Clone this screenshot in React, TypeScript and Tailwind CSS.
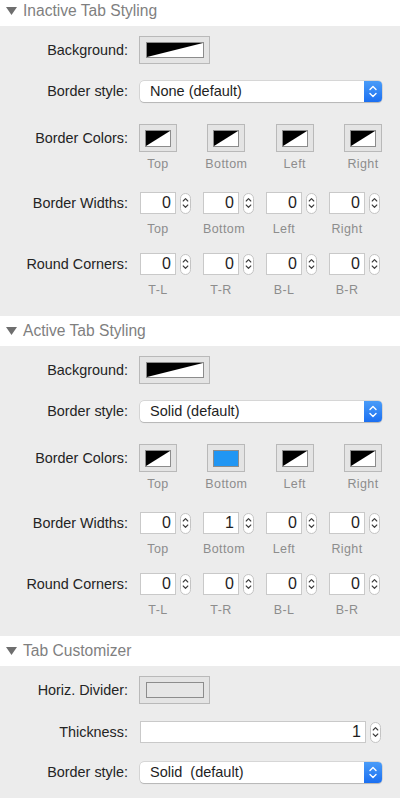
import React from 'react';

const font = { fontFamily: '"Liberation Sans", Arial, sans-serif' };

function SectionHeader({ title, className = '' }: { title: string; className?: string }) {
  return (
    <div className={`flex h-[30px] items-center bg-white pl-[6px] ${className}`}>
      <svg width="11" height="8" viewBox="0 0 11 8" className="mr-[6px]">
        <path d="M0 0 L11 0 L5.5 8 Z" fill="#6e6e6e" />
      </svg>
      <span className="text-[15.6px] text-[#7f7f7f]">{title}</span>
    </div>
  );
}

function Label({ children }: { children: React.ReactNode }) {
  return (
    <div className="w-[128px] shrink-0 text-right text-[14.4px] leading-none text-[#242424]">
      {children}
    </div>
  );
}

// Black/white "no fill" swatch inside a bevelled colour well
function Swatch({ fill }: { fill?: string }) {
  return (
    <div className="h-full w-full border border-[#8c8c8c] bg-white">
      {fill ? (
        <div className="h-full w-full" style={{ background: fill }} />
      ) : (
        <svg width="100%" height="100%" viewBox="0 0 10 10" preserveAspectRatio="none" className="block">
          <path d="M0 0 L10 0 L0 10 Z" fill="#000" />
        </svg>
      )}
    </div>
  );
}

function WideWell({ fill }: { fill?: string }) {
  return (
    <div className="flex h-[28px] w-[71px] items-center justify-center border border-[#b9b9b9] bg-[#e4e4e4]">
      <div className="h-[16px] w-[58px]">
        <Swatch fill={fill} />
      </div>
    </div>
  );
}

function SmallWell({ fill }: { fill?: string }) {
  return (
    <div className="flex h-[28px] w-[38px] items-center justify-center border border-[#b9b9b9] bg-[#e4e4e4]">
      <div className="h-[17px] w-[26px]">
        <Swatch fill={fill} />
      </div>
    </div>
  );
}

function Select({ value }: { value: string }) {
  return (
    <div className="ml-[1px] flex h-[21px] w-[242px] items-stretch overflow-hidden rounded-[4px] bg-white shadow-[0_0_0_0.5px_rgba(0,0,0,0.18),0_1px_1px_rgba(0,0,0,0.15)]">
      <div className="flex flex-1 items-center whitespace-pre pl-[10px] text-[14.5px] text-[#1e1e1e]">{value}</div>
      <div className="flex w-[18px] items-center justify-center bg-gradient-to-b from-[#4a9cf8] to-[#1b6ff1]">
        <svg width="8" height="13" viewBox="0 0 8 13" fill="none" stroke="#fff" strokeWidth="1.4" strokeLinecap="round" strokeLinejoin="round">
          <path d="M1 4.5 L4 1.5 L7 4.5" />
          <path d="M1 8.5 L4 11.5 L7 8.5" />
        </svg>
      </div>
    </div>
  );
}

function Stepper() {
  return (
    <div className="flex h-[21px] w-[11px] items-center justify-center rounded-full border border-[#c4c4c4] bg-white">
      <svg width="7" height="14" viewBox="0 0 7 14" fill="none" stroke="#3a3a3a" strokeWidth="1.1" strokeLinecap="round" strokeLinejoin="round">
        <path d="M1.2 5 L3.5 2.6 L5.8 5" />
        <path d="M1.2 9 L3.5 11.4 L5.8 9" />
      </svg>
    </div>
  );
}

function NumberField({ value, width = 'w-[36px]' }: { value: string; width?: string }) {
  return (
    <div className="flex items-center gap-[4px]">
      <div
        className={`flex h-[22px] ${width} items-center justify-end border border-[#c9c9c9] bg-white pr-[4px] text-[16px] text-[#1e1e1e]`}
      >
        {value}
      </div>
      <Stepper />
    </div>
  );
}

function SubLabel({ children }: { children: React.ReactNode }) {
  return (
    <div className="text-center text-[12.5px] leading-[14px] tracking-[0.4px] text-[#8d8d8d]">{children}</div>
  );
}

function ColorsRow({ fills }: { fills: (string | undefined)[] }) {
  const names = ['Top', 'Bottom', 'Left', 'Right'];
  return (
    <div className="mt-[21px] flex">
      <Label>
        <div className="flex h-[28px] items-center justify-end">Border Colors:</div>
      </Label>
      <div className="ml-[11px] flex w-[243px] justify-between">
        {names.map((n, i) => (
          <div key={n} className="flex w-[38px] flex-col items-center">
            <SmallWell fill={fills[i]} />
            <div className="mt-[5px] w-[60px]">
              <SubLabel>{n}</SubLabel>
            </div>
          </div>
        ))}
      </div>
    </div>
  );
}

function FieldsRow({
  label,
  values,
  names,
  className = '',
}: {
  label: string;
  values: string[];
  names: string[];
  className?: string;
}) {
  return (
    <div className={`flex ${className}`}>
      <Label>
        <div className="flex h-[22px] items-center justify-end">{label}</div>
      </Label>
      <div className="ml-[12px] flex gap-[12px]">
        {values.map((v, i) => (
          <div key={i} className="flex w-[51px] flex-col">
            <NumberField value={v} />
            <div className="mt-[8px] w-[36px]">
              <SubLabel>{names[i]}</SubLabel>
            </div>
          </div>
        ))}
      </div>
    </div>
  );
}

function TabStyling({
  bgFill,
  borderStyle,
  colors,
  widths,
}: {
  bgFill?: string;
  borderStyle: string;
  colors: (string | undefined)[];
  widths: string[];
}) {
  return (
    <div className="pt-[10px] pb-[19px]">
      <div className="flex h-[28px] items-center">
        <Label>Background:</Label>
        <div className="ml-[11px]">
          <WideWell fill={bgFill} />
        </div>
      </div>
      <div className="mt-[17px] flex h-[21px] items-center">
        <Label>Border style:</Label>
        <div className="ml-[11px]">
          <Select value={borderStyle} />
        </div>
      </div>
      <div className="h-px" />
      <ColorsRow fills={colors} />
      <FieldsRow
        className="mt-[21px]"
        label="Border Widths:"
        values={widths}
        names={['Top', 'Bottom', 'Left', 'Right']}
      />
      <FieldsRow
        className="mt-[17px]"
        label="Round Corners:"
        values={['0', '0', '0', '0']}
        names={['T-L', 'T-R', 'B-L', 'B-R']}
      />
    </div>
  );
}

export default function App() {
  return (
    <div className="h-[798px] w-[400px] overflow-hidden bg-[#ececec]" style={font}>
      <SectionHeader title="Inactive Tab Styling" className="-mt-[4px]" />
      <TabStyling
        borderStyle="None (default)"
        colors={[undefined, undefined, undefined, undefined]}
        widths={['0', '0', '0', '0']}
      />

      <SectionHeader title="Active Tab Styling" />
      <TabStyling
        borderStyle="Solid (default)"
        colors={[undefined, '#2196f3', undefined, undefined]}
        widths={['0', '1', '0', '0']}
      />

      <SectionHeader title="Tab Customizer" />
      <div className="pt-[10px]">
        <div className="flex h-[28px] items-center">
          <Label>Horiz. Divider:</Label>
          <div className="ml-[11px]">
            <WideWell fill="#e6e6e6" />
          </div>
        </div>
        <div className="mt-[17px] flex h-[22px] items-center">
          <Label>Thickness:</Label>
          <div className="ml-[12px]">
            <NumberField value="1" width="w-[226px]" />
          </div>
        </div>
        <div className="mt-[19px] flex h-[21px] items-center">
          <Label>Border style:</Label>
          <div className="ml-[11px]">
            <Select value="Solid  (default)" />
          </div>
        </div>
      </div>
    </div>
  );
}
